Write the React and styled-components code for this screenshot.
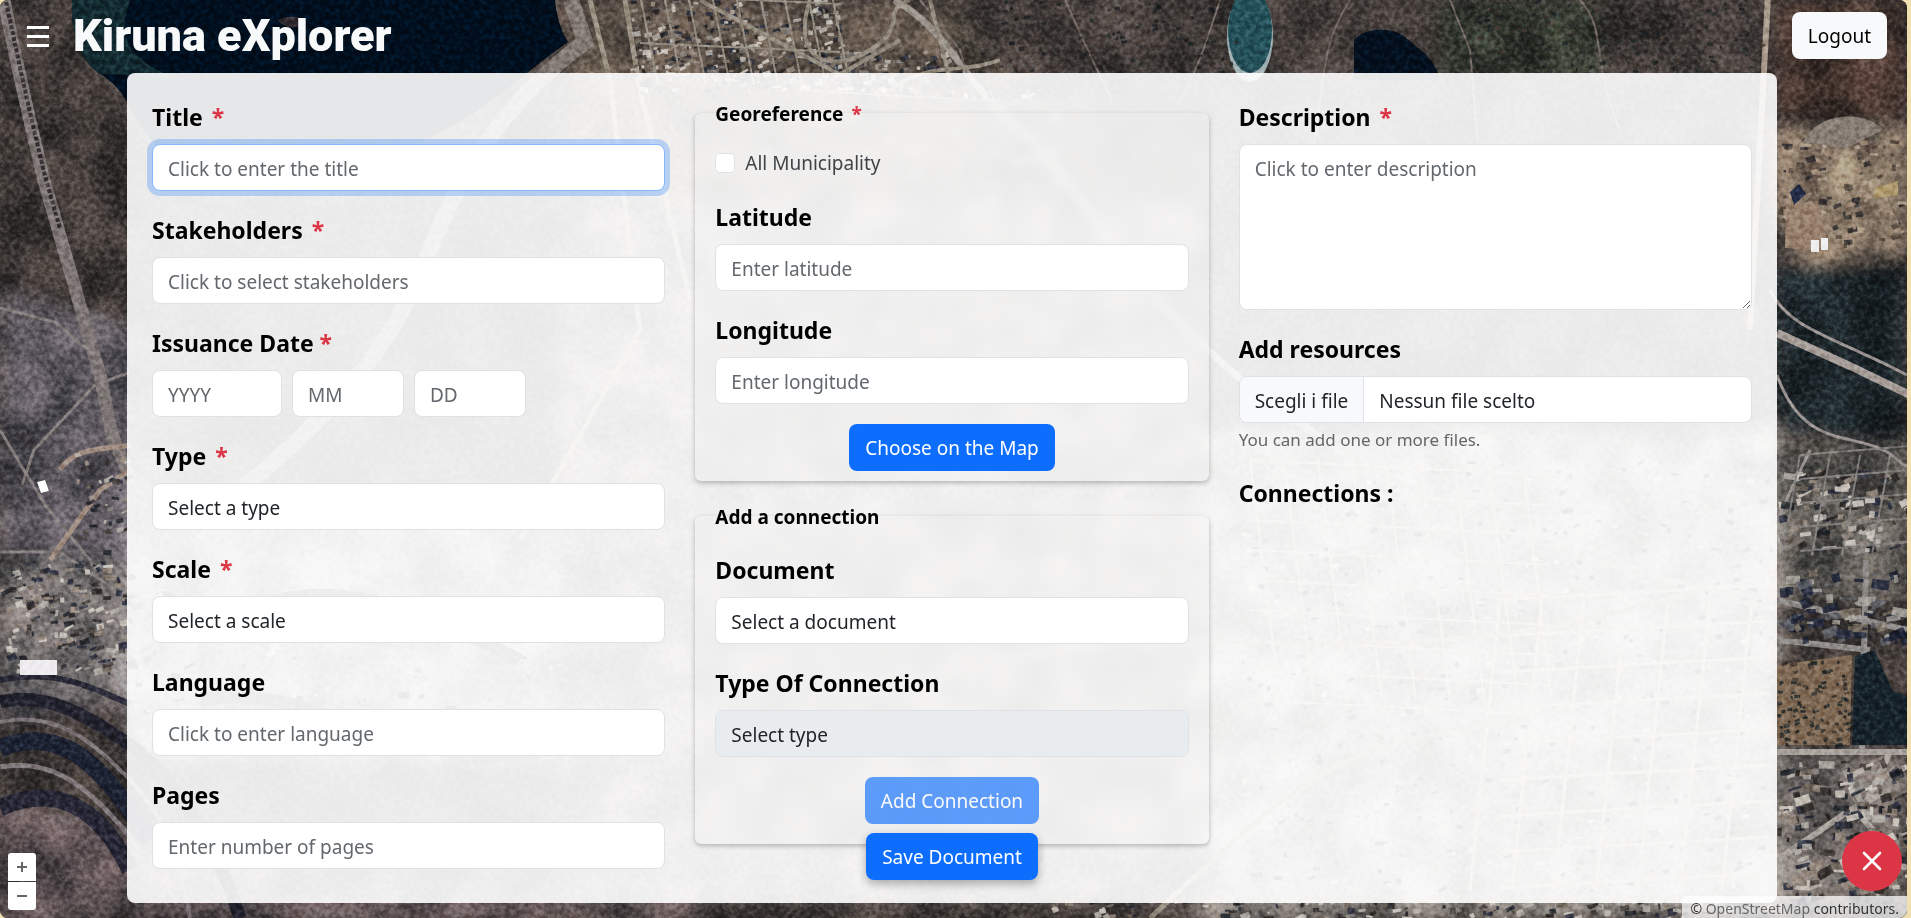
import React, { useId } from "react";
import styled, { createGlobalStyle, css } from "styled-components";

const GlobalStyle = createGlobalStyle`
  *, *::before, *::after { box-sizing: border-box; }
  body {
    margin: 0;
    background: #efdfb1;
    color: #212529;
    font-family: "Noto Sans", "Open Sans", sans-serif;
    font-size: 19px;
    line-height: 30px;
  }
  button, input, select, textarea { font: inherit; }
`;

/* ---------- page ---------- */

const Page = styled.div`
  position: relative;
  min-height: 100vh;
  margin-right: 4px;
  overflow: hidden;
  border-radius: 8px;
  background: #37322f;
`;

const MapCanvas = styled.svg`
  position: absolute;
  inset: 0;
  width: 100%;
  height: 100%;
`;

const Header = styled.header`
  position: relative;
  display: flex;
  align-items: center;
  gap: 20px;
  height: 73px;
  padding: 0 20px 2px 23px;
`;

const MenuButton = styled.button`
  display: flex;
  align-items: center;
  justify-content: center;
  width: 30px;
  height: 30px;
  padding: 0;
  border: 0;
  background: none;
  color: #fff;
  cursor: pointer;
`;

const Brand = styled.h1`
  flex: 1;
  margin: 0;
  color: #f8f9fa;
  font-family: Impact, Roboto, "Liberation Sans", sans-serif;
  font-size: 45px;
  font-weight: 900;
  line-height: 60px;
`;

const Button = styled.button`
  padding: 9px 15px 7px;
  border: 1px solid transparent;
  border-radius: 8px;
  line-height: 29px;
  cursor: pointer;
  ${({ $variant }) =>
    $variant === "light"
      ? css`
          background: #f8f9fa;
          color: #000;
        `
      : css`
          background: #0d6efd;
          color: #fff;
        `}
  &:disabled {
    opacity: 0.65;
    cursor: default;
  }
`;

const Main = styled.main`
  position: relative;
  z-index: 1;
  padding: 0 130px 14px 127px;
  @media (max-width: 1100px) {
    padding: 0 16px 64px;
  }
`;

const Panel = styled.form`
  position: relative;
  display: grid;
  grid-template-columns: repeat(3, minmax(0, 1fr));
  gap: 30px;
  padding: 25px 25px 14px;
  border-radius: 8px;
  background: rgba(255, 255, 255, 0.9);
  @media (max-width: 1100px) {
    grid-template-columns: minmax(0, 1fr);
    padding-bottom: 90px;
  }
`;

const Column = styled.div`
  display: flex;
  flex-direction: column;
`;

/* ---------- form parts ---------- */

const Field = styled.div`
  margin-bottom: 20px;
`;

const labelText = css`
  margin: 0 0 8px;
  color: #000;
  font-size: 23px;
  font-weight: 700;
  line-height: 38px;
`;

const Label = styled.label`
  display: block;
  ${labelText}
`;

const Heading = styled.h2`
  ${labelText}
`;

const Star = styled.span`
  margin-left: ${({ $tight }) => ($tight ? 0 : 3)}px;
  color: #dc3545;
`;

const control = css`
  display: block;
  width: 100%;
  padding: 9px 15px 6px;
  border: 1px solid #dee2e6;
  border-radius: 8px;
  outline: 0;
  background: #fff;
  color: #212529;
  line-height: 30px;
  &::placeholder {
    color: #63686d;
    opacity: 1;
  }
  &:focus {
    border-color: #86b7fe;
    box-shadow: 0 0 0 5px rgba(13, 110, 253, 0.25);
  }
  &:disabled {
    background: #e9ecef;
    opacity: 1;
  }
`;

const Input = styled.input`
  ${control}
  height: 47px;
`;

const Select = styled.select`
  ${control}
  height: 47px;
  appearance: none;
`;

const TextArea = styled.textarea`
  ${control}
  height: 166px;
  resize: vertical;
`;

const DateGroup = styled.fieldset`
  min-width: 0;
  margin: 0 0 20px;
  padding: 0;
  border: 0;
`;

const DateLegend = styled.legend`
  padding: 0;
  ${labelText}
`;

const DateRow = styled.div`
  display: flex;
  gap: 10px;
`;

const DateInput = styled(Input)`
  width: ${({ $wide }) => ($wide ? 130 : 112)}px;
`;

const Group = styled.fieldset`
  min-width: 0;
  margin: 0 0 20px;
  padding: 20px 20px ${({ $bottom }) => $bottom}px;
  border: 0;
  border-radius: 6px;
  box-shadow: 0 2px 5px rgba(0, 0, 0, 0.26);
  backdrop-filter: blur(5px);
`;

const Legend = styled.legend`
  padding: 2px 0 0;
  color: #000;
  font-weight: 700;
  line-height: 28px;
`;

const CheckRow = styled.label`
  display: flex;
  align-items: center;
  gap: 10px;
  min-height: 30px;
  margin-bottom: 20px;
  color: #404448;
`;

const CheckBox = styled.input`
  appearance: none;
  width: 20px;
  height: 20px;
  margin: 0;
  border: 1px solid #dee2e6;
  border-radius: 5px;
  background: #fff;
  &:checked {
    background: #0d6efd;
  }
`;

const Actions = styled.div`
  display: flex;
  justify-content: center;
`;

const SaveBar = styled.div`
  position: absolute;
  bottom: 23px;
  left: 0;
  right: 0;
  display: flex;
  justify-content: center;
`;

const SaveButton = styled(Button)`
  box-shadow: 0 4px 10px rgba(0, 0, 0, 0.3);
`;

const FileInput = styled.input`
  position: absolute;
  inset: 0;
  width: 100%;
  opacity: 0;
  cursor: pointer;
`;

const FileBox = styled.div`
  position: relative;
  display: flex;
  height: 47px;
  overflow: hidden;
  border: 1px solid #dee2e6;
  border-radius: 8px;
  background: #fff;
  line-height: 30px;
`;

const FileButton = styled.span`
  padding: 9px 15px 6px;
  border-right: 1px solid #dee2e6;
  background: #f8f9fa;
`;

const FileName = styled.span`
  padding: 9px 15px 6px;
`;

const Hint = styled.p`
  margin: 5px 0 22px;
  color: #63676a;
  font-size: 17px;
  line-height: 24px;
`;

/* ---------- map controls ---------- */

const ZoomControl = styled.div`
  position: absolute;
  left: 8px;
  bottom: 8px;
  z-index: 2;
  display: grid;
  gap: 1px;
  overflow: hidden;
  border-radius: 3px;
`;

const ZoomButton = styled.button`
  display: grid;
  place-items: center;
  width: 28px;
  height: 28px;
  padding: 0;
  border: 0;
  background: #fff;
  color: #666;
`;

const Attribution = styled.div`
  position: absolute;
  right: 0;
  bottom: 0;
  height: 22px;
  padding: 0 8px;
  border-radius: 5px 0 0;
  background: rgba(255, 255, 255, 0.75);
  color: #333;
  font-size: 14px;
  line-height: 26px;
  a {
    color: #666;
    text-decoration: none;
  }
`;

const CloseButton = styled.button`
  position: absolute;
  right: 5px;
  bottom: 27px;
  z-index: 2;
  display: grid;
  place-items: center;
  width: 60px;
  height: 60px;
  padding: 0;
  border: 0;
  border-radius: 50%;
  background: #dc3545;
  color: #fff;
`;

/* ---------- aerial view ---------- */

function seeded(seed) {
  let s = seed;
  return () => {
    s = (s * 16807) % 2147483647;
    return s / 2147483647;
  };
}

const ROOFS = ["#b9b4ad", "#87827e", "#20232c", "#6f645b", "#d4cec6", "#2b3040", "#9a8c80", "#2a2725", "#46403c"];
const SCRUB = ["#1c2226", "#3a332e", "#2a2b2b", "#4a3d35", "#232a2b"];

function scatter(seed, x, y, w, h, count, size, colors) {
  const r = seeded(seed * 7919);
  return Array.from({ length: count }, (_, i) => {
    const a = Math.round(r() * 40 - 30);
    const px = x + r() * w;
    const py = y + r() * h;
    return (
      <rect
        key={`${seed}-${i}`}
        x={px}
        y={py}
        width={2 + r() * size}
        height={2 + r() * size * 0.5}
        fill={colors[Math.floor(r() * colors.length)]}
        opacity="0.85"
        transform={`rotate(${a} ${px} ${py})`}
      />
    );
  });
}

function streets(x, y, w, h, dx, dy, skew) {
  let d = "";
  for (let px = 0; px <= w; px += dx) d += `M${x + px} ${y}l${skew} ${h}`;
  for (let py = 0; py <= h; py += dy) d += `M${x} ${y + py}l${w} ${skew / 2}`;
  return d;
}

function AerialMap() {
  return (
    <MapCanvas viewBox="0 0 1907 918" preserveAspectRatio="xMidYMid slice" aria-hidden="true">
      <defs>
        <filter id="grain" x="0" y="0" width="100%" height="100%" colorInterpolationFilters="sRGB">
          <feTurbulence type="fractalNoise" baseFrequency="0.2" numOctaves="4" seed="7" />
          <feColorMatrix values="2 0 0 0 -0.5  2 0 0 0 -0.5  2 0 0 0 -0.5  0 0 0 0 1" />
        </filter>
        <filter id="patches" x="0" y="0" width="100%" height="100%" colorInterpolationFilters="sRGB">
          <feTurbulence type="fractalNoise" baseFrequency="0.02" numOctaves="5" seed="12" />
          <feColorMatrix values="2.2 0 0 0 -0.58  2 0 0 0 -0.5  1.9 0 0 0 -0.44  0 0 0 0 1" />
        </filter>
        <filter id="soft"><feGaussianBlur stdDeviation="9" /></filter>
        <filter id="melt" x="0" y="0" width="100%" height="100%"><feGaussianBlur stdDeviation="0.5" /></filter>
      </defs>

      <rect width="1907" height="918" fill="#403a37" />
      <g filter="url(#soft)">
        <path d="M0 290L150 330L160 700L0 720Z" fill="#5a565d" />
        <path d="M0 555L140 560L140 700L0 690Z" fill="#75716f" />
        <path d="M0 800L130 830L700 900L700 918L0 918Z" fill="#5e5355" />
        <path d="M560 0H960L1010 80L900 330L560 340Z" fill="#5d534a" />
        <path d="M1440 0H1600V80H1440Z" fill="#33382f" />
        <path d="M130 500H560V760H130Z" fill="#8a888d" />
        <path d="M560 200H1200V900H560Z" fill="#6a645e" />
        <path d="M1200 430H1777V918H1200Z" fill="#8f8a83" />
        <path d="M1777 130L1907 130V255L1810 262L1777 240Z" fill="#8b7b69" />
        <path d="M1770 265L1907 262V445L1777 430Z" fill="#1f272b" />
        <path d="M1777 445H1907V600H1777Z" fill="#5a5852" />
        <path d="M1777 755H1907V918H1777Z" fill="#6f6a66" />
        <path d="M1777 0H1907V120H1777Z" fill="#45352f" />
      </g>

      <rect width="1907" height="918" filter="url(#patches)" opacity="0.34" style={{ mixBlendMode: "overlay" }} />

      <path d="M72 0C70 35 82 62 100 74C145 100 130 160 210 165C270 172 300 130 380 155C470 130 500 90 568 42C560 30 556 12 555 0Z" fill="#010e1d" />
      <path d="M72 0C70 35 82 62 100 74L170 76C110 50 125 20 130 0Z" fill="#12292f" />
      <path d="M278 20c10-5 24-4 28 2c-6 8-22 7-28-2Z" fill="#302a2f" />
      <ellipse cx="1250" cy="36" rx="23" ry="46" fill="#9fb0b3" />
      <ellipse cx="1250" cy="31" rx="22" ry="42" fill="#235059" />
      <path d="M1354 40C1365 28 1388 26 1404 36C1416 48 1435 56 1440 80H1354Z" fill="#040f1d" />

      <g filter="url(#melt)">
        <g fill="none" stroke="#857e7d">
          <path d="M3 -4C14 50 28 115 44 180L100 375L112 435L132 482L180 600" strokeWidth="13" stroke="#7f7676" />
          <path d="M5 -4C16 50 30 115 46 180L60 228" strokeWidth="4" stroke="#352f31" strokeDasharray="4 2" />
          <path d="M0 308L55 322L100 360M22 485L34 450L95 385L130 372M0 430L45 505L90 560L130 650M0 552H60L130 600" strokeWidth="3" />
          <path d="M60 470C75 445 110 450 130 445M50 560L100 490L130 470" strokeWidth="5" stroke="#a08c80" />
          <path d="M571 0L585 42C520 90 470 150 430 250S340 420 150 560" strokeWidth="16" stroke="#837a75" />
          <path d="M590 0L610 80L640 330L520 540M625 0L640 90L690 300" strokeWidth="5" stroke="#9b9283" />
          <path d="M894 0C950 30 960 80 1020 130S1140 320 1310 430S1600 560 1777 610" strokeWidth="7" stroke="#9a938b" />
          <path d="M920 0L960 50L1000 190M1065 0L1090 55L1160 200M1350 0C1310 60 1330 120 1300 190M1450 0L1470 50L1480 170M1580 0C1608 30 1590 60 1620 130M1220 0C1200 60 1190 110 1100 200" strokeWidth="2" stroke="#736762" />
          <path d="M1768 -4L1750 330" strokeWidth="6" stroke="#a99b8d" />
          <path d="M1777 333L1850 366L1910 395" strokeWidth="8" stroke="#a69d98" />
          <path d="M1770 290C1790 330 1830 335 1907 375M1777 375C1800 440 1840 435 1870 445S1895 462 1907 466M1777 520L1810 450" strokeWidth="3" stroke="#999291" />
          <path d="M1770 752H1910M1890 752L1860 815L1907 870M1777 860L1850 810L1890 790M1845 770L1870 820" strokeWidth="6" stroke="#aaa39d" />
          <path d="M1777 600L1907 630M1777 640L1870 650M1866 560L1862 750" strokeWidth="6" stroke="#8f8b89" />
        </g>

        {scatter(31, 0, 560, 130, 110, 190, 9, ROOFS)}
        {scatter(5, 70, 440, 60, 110, 35, 7, ROOFS)}
        {scatter(9, 630, 0, 210, 90, 420, 7, ROOFS)}
        {scatter(11, 830, 50, 130, 40, 110, 8, ROOFS)}
        {scatter(14, 760, 85, 300, 120, 150, 8, ROOFS)}
        {scatter(22, 1240, 460, 530, 430, 700, 7, ROOFS)}
        {scatter(23, 1777, 135, 125, 110, 130, 9, ["#b5a48f", "#544940", "#a48e7b", "#2e2c2d"])}
        {scatter(24, 1777, 470, 130, 80, 110, 12, ROOFS)}
        {scatter(25, 1777, 570, 130, 70, 70, 16, ["#191f31", "#5f6068", "#242c40", "#7b7164", "#a8a49d"])}
        {scatter(27, 1777, 760, 130, 140, 200, 14, ROOFS)}
        {scatter(28, 130, 590, 430, 160, 120, 10, ROOFS)}
        {scatter(29, 980, 0, 260, 75, 120, 4, SCRUB)}
        {scatter(33, 1450, 0, 310, 75, 220, 4, SCRUB)}
        {scatter(30, 1050, 900, 720, 20, 150, 9, ROOFS)}

        <g fill="none" stroke="#958d80" strokeWidth="3">
          <path d={streets(640, -5, 200, 90, 24, 48, 18)} strokeWidth="2" />
          <path d="M810 0C790 60 830 75 870 50S880 10 910 0M700 0L850 80M930 0L950 80M830 80L900 40M1000 60C960 75 930 60 890 90" strokeWidth="4" />
          <path d={streets(1250, 460, 300, 240, 34, 30, 30)} stroke="#b5ab99" strokeWidth="2" />
          <path d={streets(1500, 600, 270, 290, 42, 36, -30)} stroke="#b5ab99" />
          <path d={streets(800, 90, 260, 90, 38, 28, 30)} strokeWidth="2" />
          <path d={streets(1800, 455, 110, 100, 30, 24, -18)} stroke="#837f7d" strokeWidth="2" />
          <path d="M940 680C1180 590 1350 700 1700 590M1150 918C1300 780 1330 740 1530 720" strokeWidth="5" />
        </g>

        <g fill="none" strokeWidth="13">
          <path d="M0 702C50 690 92 720 130 745S220 850 240 918" stroke="#23222f" />
          <path d="M0 722C55 710 92 740 130 780S180 860 190 918" stroke="#7a7274" strokeWidth="4" />
          <path d="M0 748C60 725 100 760 150 840" stroke="#1f2030" strokeWidth="18" />
          <path d="M0 767C40 760 80 770 140 850" stroke="#7f777a" strokeWidth="5" />
          <path d="M0 808C40 790 92 790 130 870" stroke="#252536" strokeWidth="17" />
          <path d="M0 680C60 668 96 690 130 704" stroke="#2a2937" strokeWidth="6" />
          <path d="M200 640C300 560 400 600 520 660M200 700C330 680 400 780 550 750" stroke="#4c4d58" />
        </g>

        <path d="M1777 665L1852 655L1850 745H1777Z" fill="#806b54" />
        {scatter(26, 1777, 660, 72, 84, 110, 4, SCRUB)}
        <path d="M1855 656L1875 650L1892 690L1907 696V745H1852Z" fill="#18242a" />
        <path d="M1786 205L1818 201L1830 252L1785 248Z" fill="#98816e" />
        <path d="M1803 142C1820 108 1870 112 1883 130L1846 148Z" fill="#887d75" />
        <path d="M1874 188L1898 181V195L1874 198Z" fill="#b09b70" />
        <path d="M1811 240h8v12h-8zM1821 238h7v12h-7z" fill="#eee" />
        <path d="M1790 192l9-8l7 10l-12 11z" fill="#202c45" />
        <path d="M20 660h37v15H20z" fill="#eeecee" />
        <path d="M37 482l8-2l4 11l-8 2z" fill="#fff" />
      </g>

      <rect width="1907" height="918" filter="url(#grain)" opacity="0.4" style={{ mixBlendMode: "soft-light" }} />
    </MapCanvas>
  );
}

/* ---------- composed fields ---------- */

function Required({ tight }) {
  return (
    <>
      {" "}
      <Star $tight={tight}>*</Star>
    </>
  );
}

function TextField({ label, required, ...rest }) {
  const id = useId();
  return (
    <Field>
      <Label htmlFor={id}>
        {label}
        {required && <Required />}
      </Label>
      <Input id={id} {...rest} />
    </Field>
  );
}

function SelectField({ label, required, option, disabled }) {
  const id = useId();
  return (
    <Field>
      <Label htmlFor={id}>
        {label}
        {required && <Required />}
      </Label>
      <Select id={id} disabled={disabled}>
        <option>{option}</option>
      </Select>
    </Field>
  );
}

export default function App() {
  return (
    <Page>
      <GlobalStyle />
      <AerialMap />

      <Header>
        <MenuButton type="button" aria-label="Menu">
          <svg width="30" height="30" viewBox="0 0 30 30" fill="none" stroke="currentColor" strokeWidth="3">
            <path d="M4 6.5h22M4 15.5h22M4 24.5h22" />
          </svg>
        </MenuButton>
        <Brand>Kiruna eXplorer</Brand>
        <Button type="button" $variant="light">Logout</Button>
      </Header>

      <Main>
        <Panel onSubmit={(e) => e.preventDefault()}>
          <Column>
            <TextField label="Title" required placeholder="Click to enter the title" autoFocus />
            <TextField label="Stakeholders" required placeholder="Click to select stakeholders" />
            <DateGroup>
              <DateLegend>
                Issuance Date
                <Required tight />
              </DateLegend>
              <DateRow>
                <DateInput $wide placeholder="YYYY" aria-label="Year" />
                <DateInput placeholder="MM" aria-label="Month" />
                <DateInput placeholder="DD" aria-label="Day" />
              </DateRow>
            </DateGroup>
            <SelectField label="Type" required option="Select a type" />
            <SelectField label="Scale" required option="Select a scale" />
            <TextField label="Language" placeholder="Click to enter language" />
            <TextField label="Pages" placeholder="Enter number of pages" />
          </Column>

          <Column>
            <Group $bottom={10}>
              <Legend>
                Georeference
                <Required />
              </Legend>
              <CheckRow>
                <CheckBox type="checkbox" />
                All Municipality
              </CheckRow>
              <TextField label="Latitude" placeholder="Enter latitude" />
              <TextField label="Longitude" placeholder="Enter longitude" />
              <Actions>
                <Button type="button">Choose on the Map</Button>
              </Actions>
            </Group>
            <Group $bottom={20}>
              <Legend>Add a connection</Legend>
              <SelectField label="Document" option="Select a document" />
              <SelectField label="Type Of Connection" option="Select type" disabled />
              <Actions>
                <Button type="button" disabled>Add Connection</Button>
              </Actions>
            </Group>
          </Column>

          <Column>
            <Field>
              <Label htmlFor="description">
                Description
                <Required />
              </Label>
              <TextArea id="description" placeholder="Click to enter description" />
            </Field>
            <Label htmlFor="resources">Add resources</Label>
            <FileBox>
              <FileButton>Scegli i file</FileButton>
              <FileName>Nessun file scelto</FileName>
              <FileInput id="resources" type="file" multiple />
            </FileBox>
            <Hint>You can add one or more files.</Hint>
            <Heading>Connections :</Heading>
          </Column>

          <SaveBar>
            <SaveButton type="submit">Save Document</SaveButton>
          </SaveBar>
        </Panel>
      </Main>

      <ZoomControl>
        <ZoomButton type="button" aria-label="Zoom in">
          <svg width="10" height="10" viewBox="0 0 10 10" stroke="currentColor" strokeWidth="2"><path d="M0 5h10M5 0v10" /></svg>
        </ZoomButton>
        <ZoomButton type="button" aria-label="Zoom out">
          <svg width="10" height="10" viewBox="0 0 10 10" stroke="currentColor" strokeWidth="2"><path d="M0 5h10" /></svg>
        </ZoomButton>
      </ZoomControl>
      <Attribution>
        © <a href="#copyright">OpenStreetMap</a> contributors.
      </Attribution>
      <CloseButton type="button" aria-label="Close">
        <svg width="20" height="20" viewBox="0 0 20 20" stroke="currentColor" strokeWidth="2.6" strokeLinecap="round">
          <path d="M2 2l16 16M18 2L2 18" />
        </svg>
      </CloseButton>
    </Page>
  );
}
